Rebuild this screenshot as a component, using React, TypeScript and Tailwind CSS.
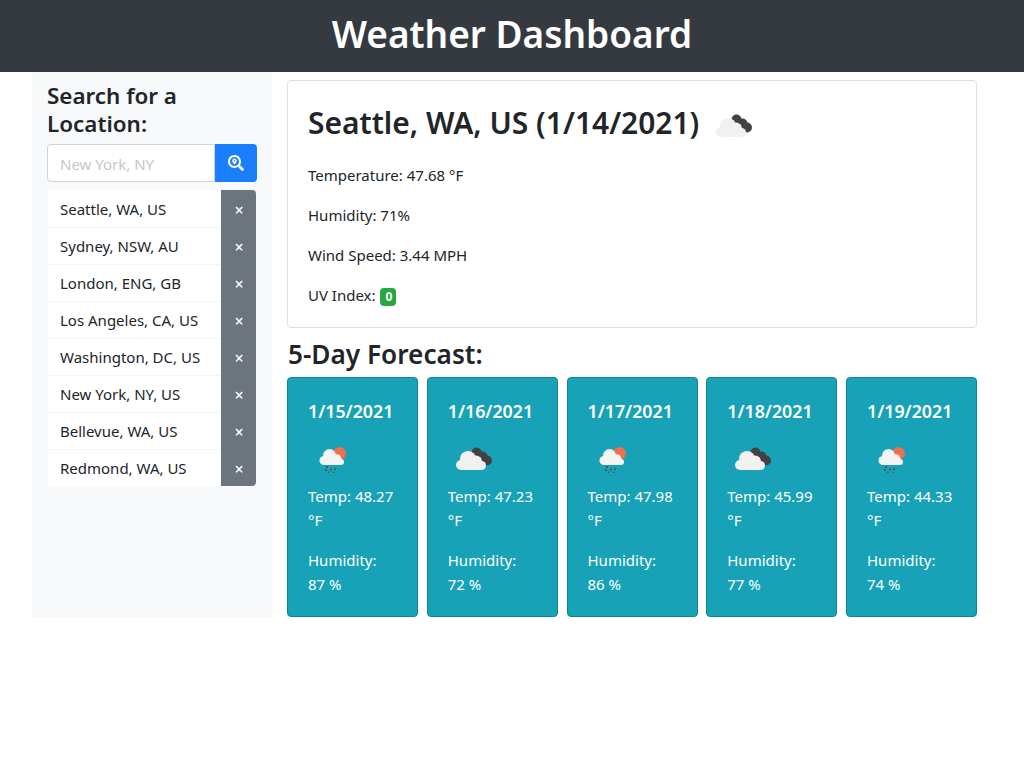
import { FaSearchLocation } from "react-icons/fa";

function CloudsIcon() {
  return (
    <svg width={50} height={50} viewBox="0 0 50 50" className="shrink-0">
      <g fill="#424242">
        <circle cx="28.500" cy="18.500" r="5" />
        <circle cx="34.500" cy="22.500" r="5" />
        <circle cx="39" cy="26.500" r="5" />
      </g>
      <g fill="#f1f1f1">
        <circle cx="13" cy="31" r="5" />
        <circle cx="20" cy="25" r="8" />
        <circle cx="28" cy="27.500" r="6" />
        <circle cx="33.500" cy="31.500" r="4.500" />
        <rect x="13" y="29" width="20.500" height="7" />
      </g>
    </svg>
  );
}

function RainIcon() {
  return (
    <svg width={50} height={50} viewBox="0 0 50 50" className="shrink-0">
      <circle cx="31.500" cy="19.500" r="6.500" fill="#f26d4f" />
      <g fill="#f4f4f4">
        <circle cx="16" cy="26.500" r="4.500" />
        <circle cx="21.500" cy="21.500" r="6.500" />
        <circle cx="28.500" cy="25" r="4.800" />
        <circle cx="33" cy="28" r="3" />
        <rect x="16" y="25" width="17" height="6" />
      </g>
      <g fill="#455a64">
        <rect x="18" y="32" width="2" height="2" />
        <rect x="17" y="35" width="2" height="2" />
        <rect x="22" y="34.500" width="2" height="2" />
        <rect x="26" y="34" width="2" height="2" />
        <rect x="20" y="37.500" width="1.500" height="1.500" />
        <rect x="25" y="37.500" width="1.500" height="1.500" />
      </g>
    </svg>
  );
}

const cities = [
  "Seattle, WA, US",
  "Sydney, NSW, AU",
  "London, ENG, GB",
  "Los Angeles, CA, US",
  "Washington, DC, US",
  "New York, NY, US",
  "Bellevue, WA, US",
  "Redmond, WA, US",
];

const forecast = [
  { d: "1/15/2021", t: "48.27", h: "87", rain: true },
  { d: "1/16/2021", t: "47.23", h: "72", rain: false },
  { d: "1/17/2021", t: "47.98", h: "86", rain: true },
  { d: "1/18/2021", t: "45.99", h: "77", rain: false },
  { d: "1/19/2021", t: "44.33", h: "74", rain: true },
];

export default function App() {
  return (
    <div className="bg-white min-h-[768px] text-[#212529] text-[15px] leading-6" style={{ fontFamily: '"Noto Sans", sans-serif' }}>
      <header className="bg-[#343a40] h-[72px] flex items-center justify-center">
        <h1 className="text-white text-[37px] font-semibold leading-[48px] pb-[4px]">Weather Dashboard</h1>
      </header>
      <div className="w-[960px] h-[545px] mx-auto flex items-stretch">
        <aside className="w-[240px] bg-[#f8f9fa] px-[15px] pt-[10px] shrink-0">
          <h2 className="text-[22.400px] font-semibold leading-[28px] mb-[6px]">Search for a Location:</h2>
          <div className="flex h-[38px] w-[210px]">
            <input
              readOnly
              placeholder="New York, NY"
              className="w-[168px] bg-white border border-[#ced4da] rounded-l-[4px] px-[12px] pt-[1px] text-[15px] placeholder:text-[#c4c7ca] outline-none"
            />
            <button className="w-[42px] bg-[#1a7fff] rounded-r-[4px] flex items-center justify-center">
              <FaSearchLocation size={16} color="white" />
            </button>
          </div>
          <ul className="mt-[8px] ml-[1px] w-[208px]">
            {cities.map((c, i) => (
              <li key={c} className="flex h-[37px]">
                <span className={`flex-1 pl-[12px] flex items-center bg-white ${i > 0 ? "border-t border-[#f4f4f4]" : ""}`}>{c}</span>
                <span
                  className={`w-[35px] pl-[1px] pt-[2px] bg-[#6c757d] text-white flex items-center justify-center text-[16px] font-medium ${i === 0 ? "rounded-tr-[4px]" : ""} ${i === cities.length - 1 ? "rounded-br-[4px]" : ""}`}
                >
                  ×
                </span>
              </li>
            ))}
          </ul>
        </aside>
        <main className="flex-1 px-[15px] pt-[8px]">
          <section className="border border-[#dfdfdf] rounded-[4px] h-[248px] px-[20px] pt-[20px]">
            <div className="flex items-center h-[44px]">
              <h2 className="text-[29.950px] font-semibold leading-[38px]">Seattle, WA, US (1/14/2021)</h2>
              <span className="ml-[9px] mt-[6px]"><CloudsIcon /></span>
            </div>
            <p className="mt-[18px] mb-[16px]">Temperature: 47.68 °F</p>
            <p className="mb-[16px]">Humidity: 71%</p>
            <p className="mb-[16px]">Wind Speed: 3.44 MPH</p>
            <p>
              UV Index:{" "}
              <span className="inline-block ml-[1px] bg-[#28a745] text-white text-[12px] font-bold leading-none pl-[5px] pr-[4px] py-[3px] rounded-[4px] align-baseline">0</span>
            </p>
          </section>
          <h3 className="text-[26.200px] font-semibold leading-[32px] mt-[10px] mb-[7px] pl-[1px]">5-Day Forecast:</h3>
          <div className="flex justify-between">
            {forecast.map((f) => (
              <div key={f.d} className="w-[131px] h-[240px] bg-[#17a2b8] border border-[#138496] rounded-[4px] text-white px-[20px] pt-[21px]">
                <h5 className="text-[17.800px] font-semibold leading-[24px] whitespace-nowrap">{f.d}</h5>
                <div className="h-[50px] mt-[11px] flex items-center">
                  {f.rain ? <RainIcon /> : <CloudsIcon />}
                </div>
                <p className="mb-[16px]">Temp: {f.t} °F</p>
                <p>Humidity: {f.h} %</p>
              </div>
            ))}
          </div>
        </main>
      </div>
    </div>
  );
}
